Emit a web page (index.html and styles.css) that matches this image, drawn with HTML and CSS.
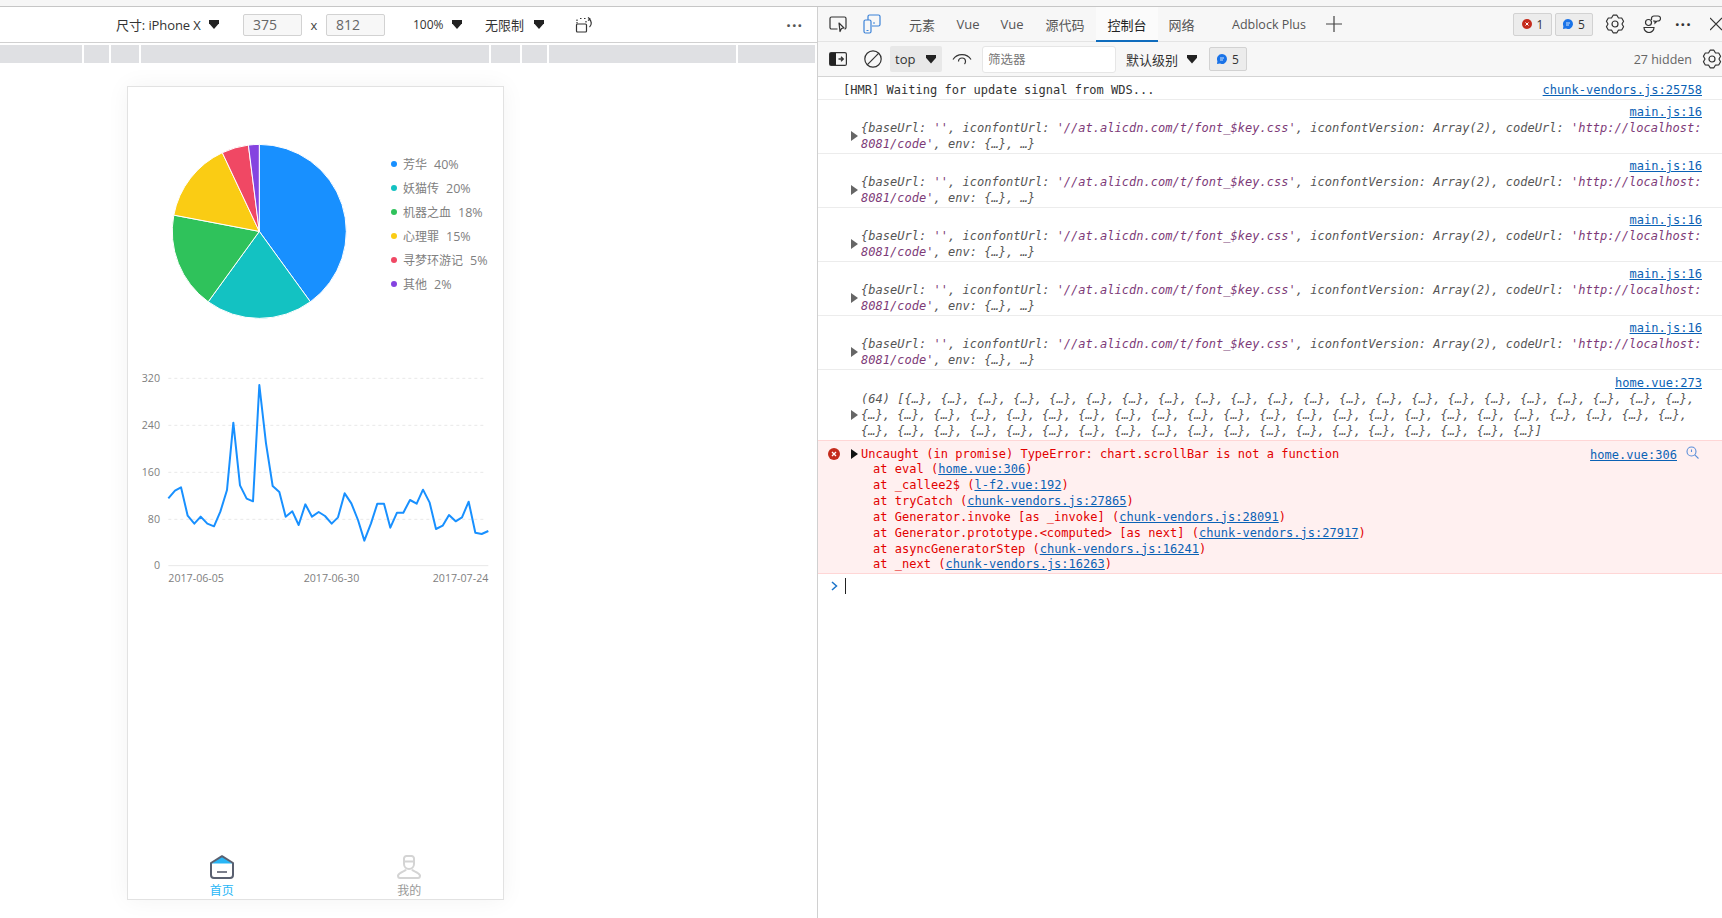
FILE: index.html
```html
<!DOCTYPE html>
<html lang="zh-CN">
<head>
<meta charset="utf-8">
<title>DevTools</title>
<link rel="stylesheet" href="styles.css">
</head>
<body>
<div class="topstrip"></div>
<div class="main">
  <section class="left">
    <div class="devbar">
      <span class="dv-size">尺寸: iPhone X</span><i class="caret"></i>
      <span class="num num-a">375</span><span class="times">x</span><span class="num">812</span>
      <span class="dv-zoom">100%</span><i class="caret"></i>
      <span class="dv-net">无限制</span><i class="caret"></i>
      <svg class="dv-rot" viewBox="0 0 19 18" width="19" height="18" fill="none" stroke="#333" stroke-width="1.2"><path d="M2 7.5V3.5h1M5 2.5h2M9 2.5h2M11 5v2" stroke-dasharray="1.5 1"/><rect x="1.5" y="8" width="10" height="8" rx="1"/><path d="M14 3a5 5 0 0 1 .5 8M13 1.5l2 1.5-2 1.5"/></svg>
      <span class="more">···</span>
    </div>
    <div class="ruler"><i></i><i></i><i></i><i></i><i></i><i></i><i></i><i></i></div>
    <div class="phone">
      <div class="pie-row">
        <svg class="pie" viewBox="-100.3 -100.4 200 200" width="200" height="200" stroke="#fff" stroke-width="1">
          <path fill="#1890ff" d="M0 0V-87A87 87 0 0 1 51.1 70.4Z"/>
          <path fill="#13c2c2" d="M0 0L51.1 70.4A87 87 0 0 1 -51.1 70.4Z"/>
          <path fill="#2fc25b" d="M0 0L-51.1 70.4A87 87 0 0 1 -85.5 -16.3Z"/>
          <path fill="#facc14" d="M0 0L-85.5 -16.3A87 87 0 0 1 -37 -78.7Z"/>
          <path fill="#f04864" d="M0 0L-37 -78.7A87 87 0 0 1 -10.9 -86.3Z"/>
          <path fill="#8543e0" d="M0 0L-10.9 -86.3A87 87 0 0 1 0 -87Z"/>
        </svg>
        <ul class="legend">
          <li><i class="dot c1"></i><span>芳华</span><b>40%</b></li>
          <li><i class="dot c2"></i><span>妖猫传</span><b>20%</b></li>
          <li><i class="dot c3"></i><span>机器之血</span><b>18%</b></li>
          <li><i class="dot c4"></i><span>心理罪</span><b>15%</b></li>
          <li><i class="dot c5"></i><span>寻梦环游记</span><b>5%</b></li>
          <li><i class="dot c6"></i><span>其他</span><b>2%</b></li>
        </ul>
      </div>
      <svg class="line" viewBox="0 0 1110 690" width="370" height="230">
        <g stroke="#e8e8e8" stroke-width="3">
          <path stroke-dasharray="9 9" d="M115 55H1068M115 196H1068M115 337H1068M115 478H1068"/>
          <path d="M115 617H1075"/>
        </g>
        <polyline fill="none" stroke="#1890ff" stroke-width="6" stroke-linejoin="round" points="115,415 135,392 153,382 173,467 193,491 212,470 232,491 252,499 271,455 291,390 310,188 330,376 350,416 369,424 388,75 408,250 428,378 448,396 467,470 487,454 506,495 526,433 546,470 566,456 585,468 605,491 624,472 644,400 664,430 684,480 703,542 723,490 742,431 762,431 781,503 801,458 820,458 840,420 860,431 879,389 899,428 918,507 938,497 957,465 977,484 996,472 1016,425 1036,518 1055,522 1075,513"/>
        <g class="ax" text-anchor="end">
          <text x="90" y="66">320</text>
          <text x="90" y="207">240</text>
          <text x="90" y="348">160</text>
          <text x="90" y="489">80</text>
          <text x="90" y="628">0</text>
        </g>
        <g class="ax">
          <text x="115" y="666">2017-06-05</text>
          <text x="521" y="666">2017-06-30</text>
          <text x="1075" y="666" text-anchor="end">2017-07-24</text>
        </g>
      </svg>
      <nav class="tabbar">
        <div class="tbi on">
          <svg viewBox="0 0 24 24" width="24" height="24"><path fill="#29b6f6" d="M12 1.5 22.5 8.5H1.5Z"/><path fill="none" stroke="#5a6070" stroke-width="2" stroke-linejoin="round" d="M12 1.2 23 8V20a3 3 0 0 1-3 3H4a3 3 0 0 1-3-3V8Z"/><path stroke="#5a6070" stroke-width="1.6" d="M7 17H17"/></svg>
          <span>首页</span>
        </div>
        <div class="tbi">
          <svg viewBox="0 0 24 24" width="24" height="24" fill="none" stroke="#d4d4d4" stroke-width="2"><path d="M7 3.5a2.5 2.5 0 0 1 2.5-2.500h5A2.500 2.500 0 0 1 17 3.500V9a5 5 0 0 1-10 0Z"/><path d="M7 6.500h10M9 14.500c-1 2-7 2.500-8 6 0 1.500 1 2.500 2 2.500h18c1 0 2-1 2-2.500-1-3.500-7-4-8-6"/></svg>
          <span>我的</span>
        </div>
      </nav>
    </div>
  </section>

  <section class="right">
    <div class="dt-bar">
      <svg class="ic-inspect" viewBox="0 0 18 18" width="18" height="18" fill="none" stroke="#333" stroke-width="1.2"><path d="M8.500 14H2.500A1.500 1.500 0 0 1 1 12.500V3.500A1.500 1.500 0 0 1 2.500 2h13A1.500 1.500 0 0 1 17 3.500v9a1.500 1.500 0 0 1-1.500 1.500"/><path d="M10 8l5 5-2.500.5-1.500 3Z" stroke-linejoin="round"/></svg>
      <svg class="ic-device" viewBox="0 0 18 20" width="18" height="20" fill="none" stroke="#3b82d8" stroke-width="1.2"><path d="M5 6V2.500A1.500 1.500 0 0 1 6.500 1h9A1.500 1.500 0 0 1 17 2.500v8a1.500 1.500 0 0 1-1.500 1.500H9"/><rect x="1" y="6" width="7" height="13" rx="1.500"/><path d="M10 9h2M3.500 16.500h2"/></svg>
      <div class="tabs">
        <span class="tab">元素</span><span class="tab">Vue</span><span class="tab">Vue</span><span class="tab">源代码</span><span class="tab active">控制台</span><span class="tab">网络</span><span class="tab adblock">Adblock Plus</span>
      </div>
      <svg class="ic-plus" viewBox="0 0 16 16" width="16" height="16" stroke="#444" stroke-width="1.2"><path d="M8 0V16M0 8H16"/></svg>
      <span class="badge first"><svg viewBox="0 0 10 10" width="10" height="10"><circle cx="5" cy="5" r="5" fill="#c42b1c"/><path d="M3.500 3.500 6.500 6.500M6.500 3.500 3.500 6.500" stroke="#fff"/></svg>1</span>
      <span class="badge second"><svg viewBox="0 0 10 10" width="10" height="10"><path d="M5 0a5 5 0 1 1-2 9.600L0 10l.4-3A5 5 0 0 1 5 0Z" fill="#1a73e8"/><path d="M3 4H7M3 6H6" stroke="#fff" stroke-width=".8"/></svg>5</span>
      <svg class="ic-gear" viewBox="0 0 20 20" width="20" height="20" fill="none" stroke="#333" stroke-width="1.200" stroke-linejoin="round"><g transform="rotate(90 10 10)"><polygon points="18.800,8.130 18.800,11.870 16.060,13.500 16.020,16.690 12.780,18.560 10,17 7.220,18.560 3.980,16.690 3.940,13.500 1.200,11.870 1.200,8.130 3.940,6.500 3.980,3.310 7.220,1.440 10,3 12.780,1.440 16.020,3.310 16.060,6.500"/></g><circle cx="10" cy="10" r="3"/></svg>
      <svg class="ic-people" viewBox="0 0 18 18" width="18" height="18" fill="none" stroke="#333" stroke-width="1.200"><circle cx="5.500" cy="7.500" r="3"/><path d="M1 12.500h10a5 5 0 0 1-10 0Z"/><path d="M8.500 5V3.500A2.500 2.500 0 0 1 11 1h4a2.500 2.500 0 0 1 2.500 2.500A2.500 2.500 0 0 1 15 6h-1l-2 2V6h-2"/></svg>
      <span class="more dark">···</span>
      <svg class="ic-x" viewBox="0 0 12 14" width="12" height="14" stroke="#333" stroke-width="1.200"><path d="M0 1 12 13M12 1 0 13"/></svg>
    </div>
    <div class="dt-bar two">
      <svg class="ic-inspect" viewBox="0 0 18 14" width="18" height="14"><rect x=".6" y=".6" width="16.800" height="12.800" rx="1.500" fill="none" stroke="#333" stroke-width="1.200"/><path fill="#222" d="M1 1h6v12H1Z"/><path stroke="#333" stroke-width="1.300" fill="none" d="M9.500 7H14M12 4.800 14.300 7 12 9.200"/></svg>
      <svg class="ic-block" viewBox="0 0 18 18" width="18" height="18" fill="none" stroke="#333" stroke-width="1.200"><circle cx="9" cy="9" r="8.200"/><path d="M3.200 14.800 14.800 3.200"/></svg>
      <div class="ctx"><span>top</span><i class="caret"></i></div>
      <svg class="ic-eye" viewBox="0 0 20 14" width="20" height="14" fill="none" stroke="#333" stroke-width="1.200"><path d="M1 7.500C5 1 15 1 19 7.500"/><path d="M6.500 9.500a3.500 3.500 0 1 1 7 0c0 1-.5 2-1 2.500"/></svg>
      <div class="filter">筛选器</div>
      <span class="level">默认级别</span><i class="caret"></i>
      <span class="badge third"><svg viewBox="0 0 10 10" width="10" height="10"><path d="M5 0a5 5 0 1 1-2 9.600L0 10l.4-3A5 5 0 0 1 5 0Z" fill="#1a73e8"/><path d="M3 4H7M3 6H6" stroke="#fff" stroke-width=".8"/></svg>5</span>
      <span class="hidden-n">27 hidden</span>
      <svg class="ic-gear2" viewBox="0 0 20 20" width="20" height="20" fill="none" stroke="#333" stroke-width="1.200" stroke-linejoin="round"><g transform="rotate(90 10 10)"><polygon points="18.800,8.130 18.800,11.870 16.060,13.500 16.020,16.690 12.780,18.560 10,17 7.220,18.560 3.980,16.690 3.940,13.500 1.200,11.870 1.200,8.130 3.940,6.500 3.980,3.310 7.220,1.440 10,3 12.780,1.440 16.020,3.310 16.060,6.500"/></g><circle cx="10" cy="10" r="3"/></svg>
    </div>

    <div class="console">
      <div class="row hmr"><span>[HMR] Waiting for update signal from WDS...</span><a class="src">chunk-vendors.js:25758</a></div>

      <div class="row"><a class="src block">main.js:16</a><div class="obj"><i class="tri"></i><div class="val"><div>{baseUrl: <s>''</s>, iconfontUrl: <s>'//at.alicdn.com/t/font_$key.css'</s>, iconfontVersion: Array(2), codeUrl: <s>'http://localhost:</s></div><div><s>8081/code'</s>, env: {…}, …}</div></div></div></div>
      <div class="row"><a class="src block">main.js:16</a><div class="obj"><i class="tri"></i><div class="val"><div>{baseUrl: <s>''</s>, iconfontUrl: <s>'//at.alicdn.com/t/font_$key.css'</s>, iconfontVersion: Array(2), codeUrl: <s>'http://localhost:</s></div><div><s>8081/code'</s>, env: {…}, …}</div></div></div></div>
      <div class="row"><a class="src block">main.js:16</a><div class="obj"><i class="tri"></i><div class="val"><div>{baseUrl: <s>''</s>, iconfontUrl: <s>'//at.alicdn.com/t/font_$key.css'</s>, iconfontVersion: Array(2), codeUrl: <s>'http://localhost:</s></div><div><s>8081/code'</s>, env: {…}, …}</div></div></div></div>
      <div class="row"><a class="src block">main.js:16</a><div class="obj"><i class="tri"></i><div class="val"><div>{baseUrl: <s>''</s>, iconfontUrl: <s>'//at.alicdn.com/t/font_$key.css'</s>, iconfontVersion: Array(2), codeUrl: <s>'http://localhost:</s></div><div><s>8081/code'</s>, env: {…}, …}</div></div></div></div>
      <div class="row"><a class="src block">main.js:16</a><div class="obj"><i class="tri"></i><div class="val"><div>{baseUrl: <s>''</s>, iconfontUrl: <s>'//at.alicdn.com/t/font_$key.css'</s>, iconfontVersion: Array(2), codeUrl: <s>'http://localhost:</s></div><div><s>8081/code'</s>, env: {…}, …}</div></div></div></div>

      <div class="row arr"><a class="src block">home.vue:273</a><div class="obj"><i class="tri"></i><div class="val"><div>(64) [{…}, {…}, {…}, {…}, {…}, {…}, {…}, {…}, {…}, {…}, {…}, {…}, {…}, {…}, {…}, {…}, {…}, {…}, {…}, {…}, {…}, {…},</div><div>{…}, {…}, {…}, {…}, {…}, {…}, {…}, {…}, {…}, {…}, {…}, {…}, {…}, {…}, {…}, {…}, {…}, {…}, {…}, {…}, {…}, {…}, {…},</div><div>{…}, {…}, {…}, {…}, {…}, {…}, {…}, {…}, {…}, {…}, {…}, {…}, {…}, {…}, {…}, {…}, {…}, {…}, {…}]</div></div></div></div>

      <div class="err">
        <div class="err-head">
          <svg class="err-ic" viewBox="0 0 12 12" width="12" height="12"><circle cx="6" cy="6" r="6" fill="#c42b1c"/><path d="M4 4 8 8M8 4 4 8" stroke="#fff" stroke-width="1.300"/></svg>
          <i class="tri black"></i>
          <span>Uncaught (in promise) TypeError: chart.scrollBar is not a function</span>
          <a class="src push">home.vue:306</a>
          <svg class="lens" viewBox="0 0 13 13" width="13" height="13" fill="none" stroke="#5b8fd9" stroke-width="1.100"><circle cx="5.500" cy="5.500" r="4.500"/><path d="M8.800 8.800 12.500 12.500M5.500 3.500v2.500"/></svg>
        </div>
        <div class="stack">
          <div>at eval (<a>home.vue:306</a>)</div>
          <div>at _callee2$ (<a>l-f2.vue:192</a>)</div>
          <div>at tryCatch (<a>chunk-vendors.js:27865</a>)</div>
          <div>at Generator.invoke [as _invoke] (<a>chunk-vendors.js:28091</a>)</div>
          <div>at Generator.prototype.&lt;computed&gt; [as next] (<a>chunk-vendors.js:27917</a>)</div>
          <div>at asyncGeneratorStep (<a>chunk-vendors.js:16241</a>)</div>
          <div>at _next (<a>chunk-vendors.js:16263</a>)</div>
        </div>
      </div>

      <div class="prompt">
        <svg viewBox="0 0 7 10" width="7" height="10" fill="none" stroke="#1a73c9" stroke-width="1.500"><path d="M1 1 5.500 5 1 9"/></svg>
        <i class="cursor"></i>
      </div>
    </div>
  </section>
</div>
</body>
</html>
```
FILE: styles.css
```css
* { box-sizing: border-box; }
html, body { margin: 0; padding: 0; }
body {
  width: 1722px;
  height: 918px;
  overflow: hidden;
  background: #fff;
  font-family: "Open Sans", "Noto Sans CJK SC", sans-serif;
  font-size: 12px;
  color: #333;
}
i { display: block; flex: none; }
svg { display: block; flex: none; }

.topstrip { height: 7px; background: #f6f6f6; border-bottom: 1px solid #c6c6c6; }
.main { display: flex; height: 911px; }

/* left: device emulation */
.left { width: 818px; flex: none; border-right: 1px solid #d0d0d0; }
.devbar {
  height: 36px;
  display: flex;
  align-items: center;
  padding-left: 116px;
  border-bottom: 1px solid #d0d0d0;
}
.caret {
  width: 10px;
  height: 9px;
  background: #222;
  clip-path: polygon(0 0, 100% 0, 100% 35%, 50% 100%, 0 35%);
}
.dv-size { width: 93px; white-space: nowrap; font-size: 13px; letter-spacing: -.1px; }
.num {
  width: 59px;
  height: 22px;
  line-height: 20px;
  padding-left: 9px;
  background: #f7f7f7;
  border: 1px solid #d2d2d2;
  border-radius: 2px;
  font-size: 14px;
  color: #666;
}
.num-a { margin-left: 24px; }
.times { width: 24px; text-align: center; font-size: 13px; color: #444; }
.dv-zoom { margin-left: 28px; width: 39px; }
.dv-net { margin-left: 23px; width: 49px; font-size: 13px; white-space: nowrap; }
.dv-rot { margin-left: 31px; }
.more { margin-left: auto; margin-right: 14px; font-size: 16px; font-weight: 700; letter-spacing: 1px; line-height: 1; color: #555; }

.ruler {
  display: grid;
  grid-template-columns: 82px 25px 28px 348px 29px 25px 187px 77px;
  column-gap: 2px;
  height: 18px;
  margin-top: 2px;
}
.ruler i { background: #dfe0e3; }

.phone {
  width: 377px;
  height: 814px;
  margin: 23px 0 0 127px;
  border: 1px solid #e2e2e2;
  box-shadow: 0 0 22px rgba(0, 0, 0, .05);
  display: flex;
  flex-direction: column;
}
.pie-row { display: flex; padding: 44px 0 0 31px; }
.legend { list-style: none; margin: 21px 0 0 32px; padding: 0; color: #808080; font-size: 12px; }
.legend li { display: flex; align-items: center; height: 24px; white-space: nowrap; }
.legend b { font-weight: 400; font-size: 12.5px; margin-left: 7px; }
.dot { width: 6px; height: 6px; border-radius: 50%; margin-right: 6px; }
.c1 { background: #1890ff; }
.c2 { background: #13c2c2; }
.c3 { background: #2fc25b; }
.c4 { background: #facc14; }
.c5 { background: #f04864; }
.c6 { background: #8543e0; }

.line { margin: 29px 0 0 2px; }
.ax text { font-family: "Open Sans", sans-serif; font-size: 32px; fill: #808080; }

.tabbar { margin-top: auto; display: flex; height: 44px; }
.tbi { flex: 1; display: flex; flex-direction: column; align-items: center; color: #999; font-size: 12px; line-height: 14px; }
.tbi span { margin-top: 5px; }
.tbi.on { color: #29b6f6; }

/* right: devtools */
.right { flex: 1; min-width: 0; }
.dt-bar {
  height: 35px;
  display: flex;
  align-items: center;
  padding-left: 11px;
  background: #f7f7f7;
  border-bottom: 1px solid #e4e4e4;
  font-size: 13px;
  color: #555;
}
.dt-bar.two { height: 35px; color: #333; border-bottom: 1px solid #d4d4d4; font-size: 12.5px; }
.ic-device { margin-left: 16px; }
.tabs {
  display: grid;
  grid-template-columns: 48px 44px 44px 62px 62px 47px 112px;
  height: 35px;
  margin-left: 17px;
}
.tab { display: flex; align-items: center; justify-content: center; white-space: nowrap; font-size: 13px; }
.tab.active { color: #222; background: #fbfbfb; border-bottom: 2px solid #0f6cbd; padding-top: 2px; }
.tab.adblock { justify-content: flex-end; padding-right: 11px; font-size: 12.5px; }
.ic-plus { margin-left: 9px; }
.badge {
  display: flex;
  align-items: center;
  justify-content: center;
  gap: 5px;
  background: #ececec;
  border: 1px solid #d2d2d2;
  border-radius: 2px;
  color: #333;
  font-size: 12px;
}
.badge.first { width: 39px; height: 23px; margin-left: auto; }
.badge.second { width: 38px; height: 23px; margin-left: 3px; }
.ic-gear { margin-left: 12px; }
.ic-people { margin-left: 18px; }
.dt-bar .more.dark { width: 18px; margin: 0 0 0 14px; color: #333; white-space: nowrap; }
.ic-x { margin-left: 17px; }

.ic-block { margin-left: 17px; }
.ctx { width: 52px; height: 26px; margin-left: 8px; padding: 0 6px 0 5px; background: #e8e8e8; border-radius: 2px; display: flex; align-items: center; justify-content: space-between; font-size: 13px; }
.ic-eye { margin-left: 10px; }
.filter { width: 134px; height: 27px; margin-left: 10px; padding-left: 5px; background: #fff; border: 1px solid #e6e6e6; border-radius: 3px; line-height: 25px; color: #777; font-size: 12.5px; }
.level { width: 61px; margin-left: 10px; white-space: nowrap; font-size: 13px; }
.badge.third { width: 38px; height: 24px; margin-left: 12px; }
.hidden-n { margin-left: auto; color: #666; white-space: nowrap; }
.ic-gear2 { margin-left: 10px; }

/* console */
.console { font-family: "DejaVu Sans Mono", monospace; font-size: 12px; line-height: 16px; letter-spacing: .02px; color: #333; }
.src { color: #0b62b5; text-decoration: underline; white-space: nowrap; }
.src.block { display: block; text-align: right; }
.row { padding: 4px 20px 1px 33px; border-bottom: 1px solid #ececec; height: 54px; }
.row.hmr { height: 23px; padding: 5px 20px 0 25px; display: flex; justify-content: space-between; }
.row.arr { height: 70px; padding-top: 5px; border-bottom: 0; }
.obj { display: flex; align-items: center; }
.tri {
  width: 7px;
  height: 10px;
  margin-right: 3px;
  background: #666;
  clip-path: polygon(0 0, 100% 50%, 0 100%);
}
.val { font-style: italic; color: #555; white-space: nowrap; }
.val s { text-decoration: none; color: #7d3a78; }
.err {
  height: 134px;
  background: #fff0f0;
  border-top: 1px solid #ffd6d6;
  border-bottom: 1px solid #ffd6d6;
  color: #e20000;
  padding-top: 5px;
}
.err-head { display: flex; align-items: center; height: 16px; padding: 0 23px 0 10px; white-space: nowrap; }
.err-ic { margin-right: 11px; }
.tri.black { background: #111; }
.push { margin-left: auto; margin-top: 2px; }
.lens { margin-left: 9px; margin-top: -3px; }
.stack { padding-left: 55px; white-space: nowrap; line-height: 15.9px; }
.stack a { color: #0b62b5; text-decoration: underline; }
.prompt { display: flex; align-items: center; height: 20px; padding: 4px 0 0 13px; }
.cursor { width: 1px; height: 16px; margin-left: 7px; background: #222; }
```
